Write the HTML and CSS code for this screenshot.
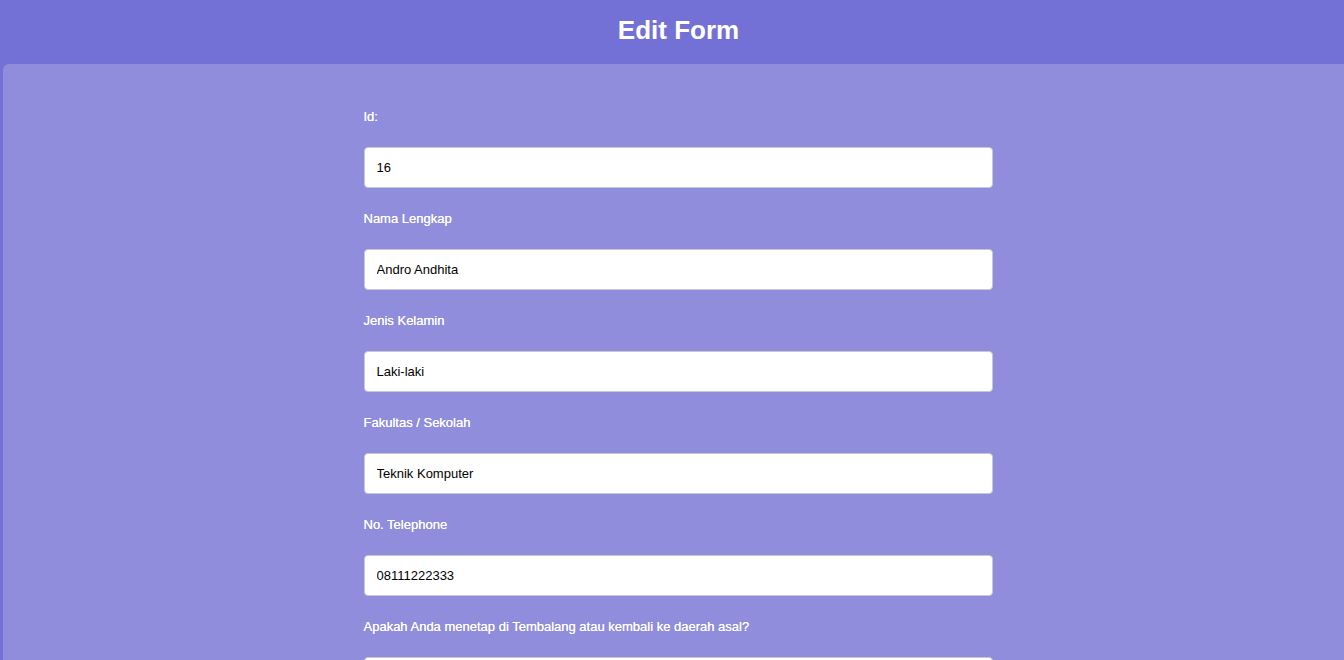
FILE: index.html
```html
<!DOCTYPE html>
<html>
<head>
<meta charset="utf-8">
<title>Edit Form</title>
<link rel="stylesheet" href="styles.css">
</head>
<body>
<header class="topbar"><h1 class="title">Edit Form</h1></header>
<main class="card">
  <form class="form">
    <div class="field">
      <label class="label">Id:</label>
      <input class="input" type="text" value="16">
    </div>
    <div class="field">
      <label class="label">Nama Lengkap</label>
      <input class="input" type="text" value="Andro Andhita">
    </div>
    <div class="field">
      <label class="label">Jenis Kelamin</label>
      <input class="input" type="text" value="Laki-laki">
    </div>
    <div class="field">
      <label class="label">Fakultas / Sekolah</label>
      <input class="input" type="text" value="Teknik Komputer">
    </div>
    <div class="field">
      <label class="label">No. Telephone</label>
      <input class="input" type="text" value="08111222333">
    </div>
    <div class="field">
      <label class="label">Apakah Anda menetap di Tembalang atau kembali ke daerah asal?</label>
      <input class="input" type="text" value="Tembalang">
    </div>
  </form>
</main>
</body>
</html>
```
FILE: styles.css
```css
html, body {
  margin: 0;
  padding: 0;
}
body {
  background: #7471d6;
  font-family: "Liberation Sans", Arial, sans-serif;
  overflow-x: hidden;
}
.topbar {
  height: 64px;
  margin-left: 3px;
  margin-right: -10px;
  display: flex;
  align-items: center;
  justify-content: center;
}
.title {
  margin: 0;
  color: #fff;
  font-size: 26px;
  font-weight: bold;
  line-height: 30px;
  position: relative;
  top: -2px;
}
.card {
  margin-left: 3px;
  margin-right: -10px;
  background: #908ddc;
  border-top-left-radius: 6px;
  padding-top: 45px;
  min-height: 700px;
}
.form {
  width: 630px;
  margin: 0 auto;
  display: flex;
  flex-direction: column;
  gap: 23px;
}
.field {
  display: flex;
  flex-direction: column;
  gap: 22px;
}
.label {
  color: #fff;
  font-size: 13px;
  line-height: 16px;
  text-shadow: 0 0 0.3px #fff;
}
.input {
  box-sizing: border-box;
  height: 41px;
  width: 629px;
  border: 1px solid #c8c8d0;
  border-radius: 4px;
  padding: 0 12px;
  font-family: "Liberation Sans", Arial, sans-serif;
  font-size: 13px;
  color: #000;
  background: #fff;
}
```
